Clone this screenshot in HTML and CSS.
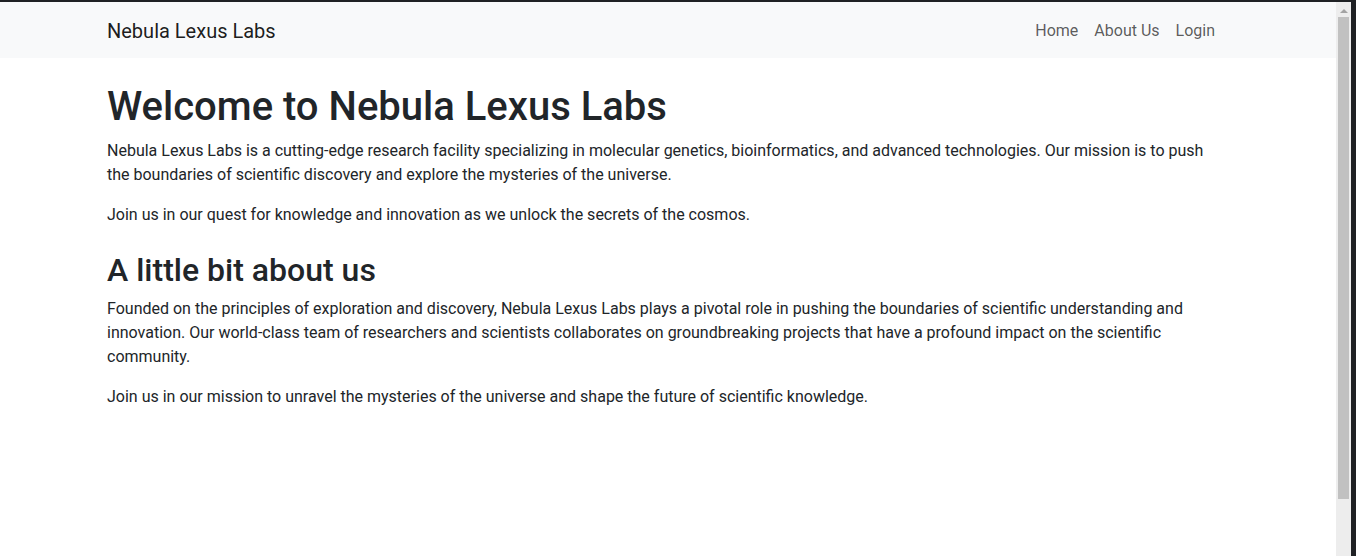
FILE: index.html
```html
<!DOCTYPE html>
<html lang="en">
<head>
<meta charset="utf-8">
<title>Nebula Lexus Labs</title>
<link rel="stylesheet" href="styles.css">
</head>
<body>
<div class="frame">
  <div class="page">
    <nav class="navbar">
      <div class="nav-inner">
        <a class="brand" href="#">Nebula Lexus Labs</a>
        <ul class="nav-links">
          <li><a href="#">Home</a></li>
          <li><a href="#">About Us</a></li>
          <li><a href="#">Login</a></li>
        </ul>
      </div>
    </nav>
    <main class="container">
      <section class="intro">
        <h1>Welcome to Nebula Lexus Labs</h1>
        <p>Nebula Lexus Labs is a cutting-edge research facility specializing in molecular genetics, bioinformatics, and advanced technologies. Our mission is to push the boundaries of scientific discovery and explore the mysteries of the universe.</p>
        <p>Join us in our quest for knowledge and innovation as we unlock the secrets of the cosmos.</p>
      </section>
      <section class="about">
        <h2>A little bit about us</h2>
        <p>Founded on the principles of exploration and discovery, Nebula Lexus Labs plays a pivotal role in pushing the boundaries of scientific understanding and innovation. Our world-class team of researchers and scientists collaborates on groundbreaking projects that have a profound impact on the scientific community.</p>
        <p>Join us in our mission to unravel the mysteries of the universe and shape the future of scientific knowledge.</p>
      </section>
    </main>
  </div>
  <div class="scrollbar">
    <div class="arrow"></div>
    <div class="thumb"></div>
  </div>
  <div class="edge"></div>
</div>
</body>
</html>
```

FILE: styles.css
```css
* { box-sizing: border-box; }
html, body { margin: 0; padding: 0; height: 100%; overflow: hidden; }
body {
  font-family: Roboto, "Liberation Sans", sans-serif;
  font-size: 16px;
  line-height: 1.5;
  color: #212529;
  background: #1f2124;
}
.frame {
  display: flex;
  height: 556px;
  padding-top: 2px;
  background: #1f2124;
}
.page {
  flex: 1;
  background: #fff;
  min-width: 0;
}
.navbar {
  background: #f8f9fa;
  padding: 9px 0 7px;
}
.nav-inner {
  width: 1116px;
  margin-left: 107px;
  display: flex;
  align-items: center;
  justify-content: space-between;
}
.brand {
  font-size: 20px;
  line-height: 30px;
  padding: 5px 0;
  color: rgba(0,0,0,.9);
  text-decoration: none;
}
.nav-links {
  list-style: none;
  margin: 0;
  padding: 0;
  display: flex;
}
.nav-links a {
  display: block;
  padding: 8px;
  color: rgba(0,0,0,.65);
  text-decoration: none;
}
.container {
  width: 1116px;
  margin-left: 107px;
  margin-top: 25px;
}
h1, h2 {
  font-weight: 500;
  line-height: 1.2;
  margin: 0 0 8px;
}
h1 { font-size: 40px; }
h2 { font-size: 32px; margin-top: 24px; }
p { margin: 0 0 16px; }
.scrollbar {
  width: 15px;
  background: #ededed;
  display: flex;
  flex-direction: column;
  align-items: center;
}
.arrow {
  margin-top: 7px;
  width: 0;
  height: 0;
  border-left: 4px solid transparent;
  border-right: 4px solid transparent;
  border-bottom: 4px solid #a3a3a3;
}
.thumb {
  margin-top: 4px;
  width: 11px;
  height: 482px;
  background: #c1c1c1;
}
.edge {
  width: 5px;
  background: #1f2124;
}
```
